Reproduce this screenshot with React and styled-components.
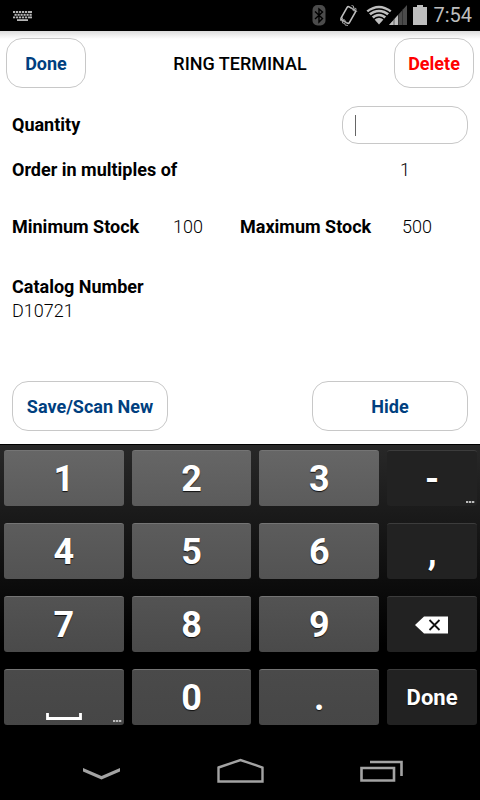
import React, { useState } from "react";
import styled, { createGlobalStyle } from "styled-components";

const GlobalStyle = createGlobalStyle`
  * {
    box-sizing: border-box;
  }
  body {
    margin: 0;
    background-color: #fff;
    font-family: Roboto, sans-serif;
    color: #000;
  }
  button, input {
    font-family: inherit;
  }
`;

const Screen = styled.div`
  display: flex;
  flex-direction: column;
  min-height: 100vh;
`;

const StatusBar = styled.div`
  display: flex;
  align-items: center;
  justify-content: space-between;
  height: 31px;
  padding: 0 8px 0 13px;
  background-color: #000;
`;

const StatusIcons = styled.div`
  display: flex;
  align-items: center;
`;

const Clock = styled.span`
  margin-left: 5px;
  font-size: 20px;
  line-height: 31px;
  color: #bebebe;
`;

const Header = styled.header`
  display: flex;
  align-items: center;
  justify-content: space-between;
  padding: 7px 6px 0;
  background: linear-gradient(#dcdcdc, #fff 8px);
`;

const Title = styled.h1`
  margin: 0;
  font-size: 18px;
  font-weight: 500;
`;

const PillButton = styled.button`
  width: ${props => (props.$wide ? "156px" : "80px")};
  height: 50px;
  padding: 0;
  font-size: 18px;
  font-weight: bold;
  color: ${props => (props.$danger ? "#ff0000" : "#003f7f")};
  background-color: #fff;
  border: 1px solid #c8c8c8;
  border-radius: 16px;
  cursor: pointer;
`;

const Form = styled.main`
  flex: 1;
  display: flex;
  flex-direction: column;
  padding: 18px 12px 13px;
`;

const QuantityRow = styled.div`
  display: flex;
  align-items: center;
  justify-content: space-between;
`;

const Label = styled.label`
  font-size: 18px;
  line-height: 24px;
  font-weight: bold;
`;

const Value = styled.output`
  font-size: 18px;
  line-height: 24px;
  font-weight: 300;
`;

const InputBox = styled.div`
  position: relative;
  width: 126px;
`;

const InputField = styled.input`
  display: block;
  width: 100%;
  height: 38px;
  padding: 0 12px;
  font-size: 18px;
  border: 1px solid #c8c8c8;
  border-radius: 16px;
  outline: none;
  caret-color: transparent;
`;

const Caret = styled.span`
  position: absolute;
  top: 9px;
  left: 13px;
  width: 1px;
  height: 21px;
  background-color: #666;
`;

const OrderRow = styled.div`
  display: grid;
  grid-template-columns: 388fr 68fr;
  margin-top: 14px;
`;

const StockRow = styled.div`
  display: grid;
  grid-template-columns: 161fr 67fr 162fr 66fr;
  margin-top: 33px;
`;

const Catalog = styled.div`
  display: flex;
  flex-direction: column;
  margin-top: 36px;
`;

const Actions = styled.div`
  display: flex;
  justify-content: space-between;
  margin-top: auto;
`;

const Keyboard = styled.div`
  display: grid;
  grid-template-columns: 4fr 4fr 4fr 3fr;
  grid-auto-rows: 56px;
  gap: 17px 8px;
  padding: 5px 3px 17px 4px;
  border-top: 1px solid #000;
  background: linear-gradient(#282828, #000 200px);
`;

const tones = [
  ["#666", "#5b5b5b"],
  ["#5c5c5c", "#535353"],
  ["#535353", "#4a4a4a"],
  ["#4a4a4a", "#464646"],
];

const Key = styled.button`
  position: relative;
  display: flex;
  align-items: center;
  justify-content: center;
  padding: 0;
  font-size: ${props => (props.$small ? "22px" : "36px")};
  font-weight: bold;
  color: #fff;
  text-shadow: 0 1px 1px #111;
  background: ${props =>
    props.$dark ? "#222" : `linear-gradient(${tones[props.$row].join(", ")})`};
  border: none;
  border-top: 1px solid ${props => (props.$dark ? "#3c3c3c" : "#747474")};
  border-radius: 3px;
  cursor: pointer;
`;

const More = styled.svg`
  position: absolute;
  right: 2px;
  bottom: 2px;
`;

const NavBar = styled.nav`
  display: flex;
  align-items: center;
  justify-content: space-around;
  height: 58px;
  padding: 0 29px 0 31px;
  background-color: #000;
`;

const NavButton = styled.button`
  display: flex;
  align-items: center;
  justify-content: center;
  width: 100px;
  height: 48px;
  padding: 0;
  background: none;
  border: none;
  cursor: pointer;
`;

const KeyboardIcon = () => (
  <svg width="20" height="12" viewBox="0 0 20 12" fill="#b4b4b4">
    {[0, 3, 6, 9, 12, 15].map(x => (
      <g key={x}>
        <rect x={x} y="1" width="2.200" height="2" />
        <rect x={x + 1.5} y="3.800" width="2.200" height="2" />
        <rect x={x} y="6.500" width="2.200" height="1.800" />
      </g>
    ))}
    <rect x="17" y="1" width="2" height="2" />
    <rect x="17" y="6.500" width="2" height="1.800" />
    <rect x="4" y="9.200" width="11" height="1.800" />
  </svg>
);

const StatusDrawing = () => (
  <svg width="116" height="31" viewBox="312 0 116 31" fill="none">
    <rect x="312.500" y="5" width="13" height="20.500" rx="5" fill="#4b4b4b" />
    <path d="M315 11.500l7.500 7-3.500 3.500V9l3.500 3-7.500 7" stroke="#000" strokeWidth="1.400" />
    <rect x="343.500" y="7.500" width="9.500" height="15" rx="1.500" transform="rotate(30 348.250 15)" stroke="#bebebe" strokeWidth="1.600" />
    <path d="M340.500 18.500v2l2 .5v2l2.500.5v1.500l3 .5M342.500 17.500v2l2.500.5v2l2.500 1M351.500 5.500l2 .5v2l2.500.5v2l1 1.500M350.500 8l2.500.5v2l1.500.5" stroke="#9a9a9a" strokeWidth="1" />
    <path d="M366.500 10.500Q379 1 391.500 10.500L379 24.500z" fill="#bebebe" />
    <path d="M367.500 13.500Q379 4.500 390.500 13.500M370 17Q379 9 388 17M373 20Q379 14 385 20" stroke="#000" strokeWidth="1.300" />
    <path d="M389 25L407 5v20z" fill="#4b4b4b" />
    <path d="M389 25l9-10v10z" fill="#bebebe" />
    <path d="M394 18v7M398.500 14v11M402.500 9v16" stroke="#222" strokeWidth=".6" />
    <path d="M413 7h4V5h6v2h4v18h-14z" fill="#bebebe" />
  </svg>
);

const DeleteIcon = () => (
  <svg width="34" height="18" viewBox="0 0 34 18">
    <path d="M0 9l9-8.500h24v17H9z" fill="#fff" />
    <path d="M14.500 4l10 10M24.500 4l-10 10" stroke="#111" strokeWidth="1.800" />
  </svg>
);

// pushed to the bottom of the key like the printed symbol
const SpaceIcon = styled.svg`
  align-self: flex-end;
  margin-bottom: 4px;
`;

const MoreDots = () => (
  <More width="9" height="3" viewBox="0 0 9 3" fill="#bbb">
    <rect x="0" y="0" width="2.300" height="2" />
    <rect x="3" y="0" width="2.300" height="2" />
    <rect x="6" y="0" width="2.300" height="2" />
  </More>
);

const keys = [
  ["1", "2", "3", "-"],
  ["4", "5", "6", ","],
  ["7", "8", "9", "delete"],
  ["space", "0", ".", "Done"],
];

function App() {
  const [quantity, setQuantity] = useState("");

  const handleKey = (key) => {
    if (key === "delete") {
      setQuantity(prev => prev.slice(0, -1));
    } else if (key === "space") {
      setQuantity(prev => prev + " ");
    } else if (key !== "Done") {
      setQuantity(prev => prev + key);
    }
  };

  const renderKey = (key) => {
    if (key === "delete") return <DeleteIcon />;
    if (key === "space") {
      return (
        <SpaceIcon width="36" height="8" viewBox="0 0 36 8">
          <path d="M1.500 0v5.500h33V0" fill="none" stroke="#fff" strokeWidth="2.800" />
        </SpaceIcon>
      );
    }
    return key;
  };

  return (
    <Screen>
      <GlobalStyle />
      <StatusBar>
        <KeyboardIcon />
        <StatusIcons>
          <StatusDrawing />
          <Clock>7:54</Clock>
        </StatusIcons>
      </StatusBar>
      <Header>
        <PillButton>Done</PillButton>
        <Title>RING TERMINAL</Title>
        <PillButton $danger>Delete</PillButton>
      </Header>
      <Form>
        <QuantityRow>
          <Label htmlFor="quantity">Quantity</Label>
          <InputBox>
            <InputField
              id="quantity"
              type="text"
              inputMode="none"
              value={quantity}
              onChange={(e) => setQuantity(e.target.value)}
            />
            {!quantity && <Caret />}
          </InputBox>
        </QuantityRow>
        <OrderRow>
          <Label htmlFor="multiples">Order in multiples of</Label>
          <Value id="multiples">1</Value>
        </OrderRow>
        <StockRow>
          <Label htmlFor="minimum">Minimum Stock</Label>
          <Value id="minimum">100</Value>
          <Label htmlFor="maximum">Maximum Stock</Label>
          <Value id="maximum">500</Value>
        </StockRow>
        <Catalog>
          <Label htmlFor="catalog">Catalog Number</Label>
          <Value id="catalog">D10721</Value>
        </Catalog>
        <Actions>
          <PillButton $wide>Save/Scan New</PillButton>
          <PillButton $wide>Hide</PillButton>
        </Actions>
      </Form>
      <Keyboard>
        {keys.map((row, rowIndex) =>
          row.map((key, index) => (
            <Key
              key={key}
              $row={rowIndex}
              $dark={index === 3}
              $small={key === "Done"}
              aria-label={key}
              onClick={() => handleKey(key)}
            >
              {renderKey(key)}
              {(key === "-" || key === "space") && <MoreDots />}
            </Key>
          ))
        )}
      </Keyboard>
      <NavBar>
        <NavButton aria-label="Back">
          <svg width="37" height="22" viewBox="0 0 37 22" fill="#a3a3a3">
            <path d="M0 8l18.500 8L37 8v3.500l-18.500 8L0 11.500z" />
          </svg>
        </NavButton>
        <NavButton aria-label="Home">
          <svg width="48" height="26" viewBox="0 0 48 26" fill="none" stroke="#a3a3a3" strokeWidth="2.400">
            <path d="M1.500 9.500L23.500 2l22 7.500V23.500h-44z" />
          </svg>
        </NavButton>
        <NavButton aria-label="Recent apps">
          <svg width="44" height="22" viewBox="0 0 44 22" fill="none" stroke="#a3a3a3" strokeWidth="2.600">
            <path d="M2.500 8h32.500v12.500H2.500zM11 2h31.500v14" />
          </svg>
        </NavButton>
      </NavBar>
    </Screen>
  );
}

export default App;
